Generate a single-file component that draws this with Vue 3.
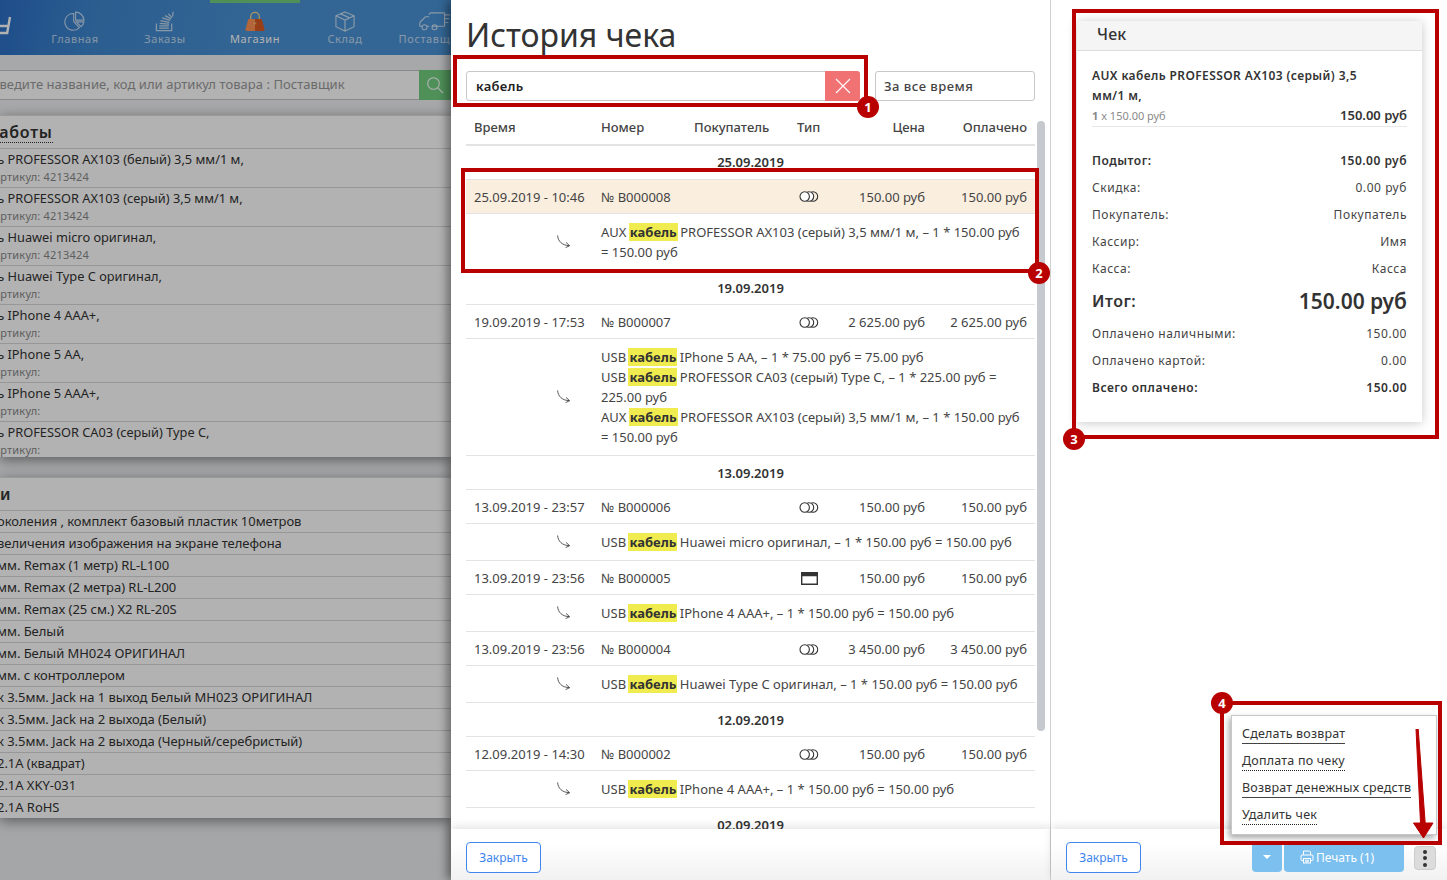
<script setup>
const navItems = [
  { key: 'pie', label: 'Главная' },
  { key: 'stack', label: 'Заказы' },
  { key: 'bag', label: 'Магазин', active: true },
  { key: 'box', label: 'Склад' },
  { key: 'truck', label: 'Поставщики' }
]
const works = [
  'Кабель PROFESSOR AX103 (белый) 3,5 мм/1 м,|Артикул: 4213424',
  'Кабель PROFESSOR AX103 (серый) 3,5 мм/1 м,|Артикул: 4213424',
  'Кабель Huawei micro оригинал,|Артикул: 4213424',
  'Кабель Huawei Type C оригинал,|Артикул:',
  'Кабель IPhone 4 AAA+,|Артикул:',
  'Кабель IPhone 5 AA,|Артикул:',
  'Кабель IPhone 5 AAA+,|Артикул:',
  'Кабель PROFESSOR CA03 (серый) Type C,|Артикул:'
].map((s) => { const [name, sub] = s.split('|'); return { name, sub } })
const simple = [
  'околения , комплект базовый пластик 10метров',
  'величения изображения на экране телефона',
  'мм. Remax (1 метр) RL-L100',
  'мм. Remax (2 метра) RL-L200',
  'мм. Remax (25 см.) X2 RL-20S',
  'мм. Белый',
  'мм. Белый MH024 ОРИГИНАЛ',
  'мм. с контроллером',
  'к 3.5мм. Jack на 1 выход Белый MH023 ОРИГИНАЛ',
  'к 3.5мм. Jack на 2 выхода (Белый)',
  'к 3.5мм. Jack на 2 выхода (Черный/серебристый)',
  '2.1A (квадрат)',
  '2.1A XKY-031',
  '2.1A RoHS'
]
const groups = [
  { date: '25.09.2019', rows: [
    { time: '25.09.2019 - 10:46', no: '№ B000008', type: 'cash', price: '150.00 руб', paid: '150.00 руб', sel: true,
      items: [['AUX', 'PROFESSOR AX103 (серый) 3,5 мм/1 м, – 1 * 150.00 руб = 150.00 руб']] }
  ] },
  { date: '19.09.2019', rows: [
    { time: '19.09.2019 - 17:53', no: '№ B000007', type: 'cash', price: '2 625.00 руб', paid: '2 625.00 руб',
      items: [
        ['USB', 'IPhone 5 AA, – 1 * 75.00 руб = 75.00 руб'],
        ['USB', 'PROFESSOR CA03 (серый) Type C, – 1 * 225.00 руб = 225.00 руб'],
        ['AUX', 'PROFESSOR AX103 (серый) 3,5 мм/1 м, – 1 * 150.00 руб = 150.00 руб']
      ] }
  ] },
  { date: '13.09.2019', rows: [
    { time: '13.09.2019 - 23:57', no: '№ B000006', type: 'cash', price: '150.00 руб', paid: '150.00 руб',
      items: [['USB', 'Huawei micro оригинал, – 1 * 150.00 руб = 150.00 руб']] },
    { time: '13.09.2019 - 23:56', no: '№ B000005', type: 'card', price: '150.00 руб', paid: '150.00 руб',
      items: [['USB', 'IPhone 4 AAA+, – 1 * 150.00 руб = 150.00 руб']] },
    { time: '13.09.2019 - 23:56', no: '№ B000004', type: 'cash', price: '3 450.00 руб', paid: '3 450.00 руб',
      items: [['USB', 'Huawei Type C оригинал, – 1 * 150.00 руб = 150.00 руб']] }
  ] },
  { date: '12.09.2019', rows: [
    { time: '12.09.2019 - 14:30', no: '№ B000002', type: 'cash', price: '150.00 руб', paid: '150.00 руб',
      items: [['USB', 'IPhone 4 AAA+, – 1 * 150.00 руб = 150.00 руб']] }
  ] },
  { date: '02.09.2019', rows: [] }
]
const summary = [
  { l: 'Подытог:', r: '150.00 руб', cls: 'strong' },
  { l: 'Скидка:', r: '0.00 руб' },
  { l: 'Покупатель:', r: 'Покупатель' },
  { l: 'Кассир:', r: 'Имя' },
  { l: 'Касса:', r: 'Касса' },
  { l: 'Итог:', r: '150.00 руб', cls: 'total' },
  { l: 'Оплачено наличными:', r: '150.00' },
  { l: 'Оплачено картой:', r: '0.00' },
  { l: 'Всего оплачено:', r: '150.00', cls: 'strong' }
]
const menu = [
  { t: 'Сделать возврат', s: 'solid' },
  { t: 'Доплата по чеку', s: 'dotted' },
  { t: 'Возврат денежных средств', s: 'solid' },
  { t: 'Удалить чек', s: 'dotted' }
]
const frames = [
  { n: 1, cls: 'f1' }, { n: 2, cls: 'f2' }, { n: 3, cls: 'f3' }, { n: 4, cls: 'f4' }
]
</script>

<template>
  <div class="page">
    <aside class="shop">
      <header class="topbar">
        <div class="logo">
          <svg width="30" height="55" viewBox="0 0 30 55" fill="none" stroke="#fff" stroke-width="2.4">
            <path d="M10 17 L7 34 M-2 33 H7 M-2 26 H8" />
          </svg>
        </div>
        <nav class="nav">
          <a v-for="n in navItems" :key="n.key" class="nav-item" :class="{ active: n.active }">
            <svg v-if="n.key === 'pie'" class="ico" width="22" height="22" viewBox="0 0 22 22" fill="none" stroke="currentColor" stroke-width="1.2">
              <path d="M9.6 2.6 A8.8 8.8 0 1 0 15.6 17.4 L9.6 11 Z" />
              <path d="M11.6 1.2 A8.8 8.8 0 0 1 20.4 9.6 L11.6 9.6 Z" />
              <path d="M12.4 11.4 L20.3 11.4 A8.8 8.8 0 0 1 17.4 16.4 Z" />
            </svg>
            <svg v-else-if="n.key === 'stack'" class="ico" width="22" height="22" viewBox="0 0 22 22" fill="none" stroke="currentColor" stroke-width="1.3">
              <path d="M2 13 V20.5 H18 V13" />
              <path d="M5 18 H15 M5 15.5 H15 M5.4 13 L15.2 13.8 M6.2 10.2 L15.6 11.8 M8 7.2 L16.4 9.8 M11 4.8 L17.4 8.2 M14.4 3 L18.4 6.8 M19.6 1 L19 5.6" />
            </svg>
            <svg v-else-if="n.key === 'bag'" class="ico" width="22" height="22" viewBox="0 0 22 22">
              <path d="M6.5 9 V6 A4.5 4.5 0 0 1 15.5 6 V9" fill="none" stroke="#f5d68c" stroke-width="1.3" />
              <path d="M4 8.5 H11 V21 H2.5 Q1 21 1 19 Z" fill="#ff9253" />
              <path d="M11 8.5 H18 L21 19 Q21 21 19.5 21 H11 Z" fill="#dc5b22" />
              <rect x="9.6" y="12" width="2.8" height="2" fill="#f5d68c" opacity=".6" />
            </svg>
            <svg v-else-if="n.key === 'box'" class="ico" width="22" height="22" viewBox="0 0 22 22" fill="none" stroke="currentColor" stroke-width="1.2">
              <path d="M11 1 L20.5 5 V16.5 L11 21 L1.5 16.5 V5 Z" />
              <path d="M1.5 5 L11 9.5 L20.5 5 M11 9.5 V21 M6.5 3 L15.8 7.2" />
            </svg>
            <svg v-else class="ico" width="34" height="22" viewBox="0 0 34 22" fill="none" stroke="currentColor" stroke-width="1.2">
              <path d="M11 4 Q11 2 13 2 H27 V16 H14" />
              <path d="M11 6 H7 L2 11 Q1 12 1 14 V16 H3.5 M8.5 16 H11" />
              <circle cx="6" cy="17" r="2.6" />
              <circle cx="16.5" cy="17" r="2.6" />
              <path d="M27 4 H33 M27 8 H32 M27 12 H31" />
            </svg>
            <span class="nav-label">{{ n.label }}</span>
          </a>
        </nav>
      </header>

      <div class="shop-search">
        <div class="shop-input"><span>Введите название, код или артикул товара : Поставщик</span></div>
        <button class="shop-go" type="button" aria-label="Поиск">
          <svg width="18" height="18" viewBox="0 0 18 18" fill="none" stroke="#fff" stroke-width="1.1">
            <circle cx="7.5" cy="7.5" r="5.8" />
            <path d="M11.8 11.8 L17 17" />
          </svg>
        </button>
      </div>

      <section class="card-list works">
        <h3 class="list-title"><span class="dotted">Работы</span></h3>
        <div v-for="w in works" :key="w.name" class="work-row">
          <div class="work-name">{{ w.name }}</div>
          <div class="work-sub">{{ w.sub }}</div>
        </div>
      </section>

      <section class="card-list simple">
        <h3 class="list-title short">и</h3>
        <div v-for="s in simple" :key="s" class="simple-row">{{ s }}</div>
      </section>

      <div class="dim"></div>
    </aside>

    <main class="history">
      <h1 class="title">История чека</h1>
      <div class="filters">
        <div class="search">
          <span class="search-val">кабель</span>
          <button class="clear" type="button" aria-label="Очистить">
            <svg width="16" height="16" viewBox="0 0 16 16" fill="none" stroke="#fff" stroke-width="1.1">
              <path d="M1 1 L15 15 M15 1 L1 15" />
            </svg>
          </button>
        </div>
        <div class="period">За все время</div>
      </div>

      <div class="table">
        <div class="grid thead">
          <span>Время</span><span>Номер</span><span>Покупатель</span><span>Тип</span>
          <span class="num">Цена</span><span class="num">Оплачено</span>
        </div>
        <template v-for="g in groups" :key="g.date">
          <div class="date-row">{{ g.date }}</div>
          <template v-for="r in g.rows" :key="r.no">
            <div class="grid row" :class="{ selected: r.sel }">
              <span>{{ r.time }}</span>
              <span>{{ r.no }}</span>
              <span></span>
              <span class="type">
                <svg v-if="r.type === 'cash'" width="20" height="11" viewBox="0 0 20 11" fill="none" stroke="#333" stroke-width="1.1">
                  <circle cx="14" cy="5.5" r="4.7" />
                  <circle cx="10" cy="5.5" r="4.7" fill="#fff" />
                  <circle cx="5.7" cy="5.5" r="4.7" fill="#fff" />
                </svg>
                <svg v-else width="17" height="13" viewBox="0 0 17 13">
                  <path d="M0 0 H17 V13 H0 Z M1.4 4.2 V11.6 H15.6 V4.2 Z" fill="#333" fill-rule="evenodd" />
                </svg>
              </span>
              <span class="num">{{ r.price }}</span>
              <span class="num">{{ r.paid }}</span>
            </div>
            <div class="detail">
              <span class="turn">
                <svg width="14" height="14" viewBox="0 0 14 14" fill="none" stroke="#444" stroke-width=".9">
                  <path d="M.6 .5 C1 6 5 10.6 12.4 10.6" />
                  <path d="M9 7.4 L12.6 10.7 L8.6 12.6" />
                </svg>
              </span>
              <div class="lines">
                <div v-for="(it, i) in r.items" :key="i">{{ it[0] }} <mark class="hit">кабель</mark> {{ it[1] }}</div>
              </div>
            </div>
          </template>
        </template>
      </div>
      <div class="scroll-thumb"></div>

      <footer class="foot">
        <button class="btn-close" type="button">Закрыть</button>
      </footer>
    </main>

    <section class="receipt">
      <div class="receipt-scroll">
        <article class="card">
          <h2 class="card-head">Чек</h2>
          <div class="card-body">
            <div class="item-name">AUX кабель PROFESSOR AX103 (серый) 3,5 мм/1 м,</div>
            <div class="item-meta">
              <span class="qty"><b>1</b> x 150.00 руб</span>
              <b class="item-sum">150.00 руб</b>
            </div>
            <div class="sums">
              <div v-for="s in summary" :key="s.l" class="sum" :class="s.cls">
                <span>{{ s.l }}</span><span>{{ s.r }}</span>
              </div>
            </div>
          </div>
        </article>
      </div>
      <footer class="foot">
        <button class="btn-close" type="button">Закрыть</button>
        <div class="actions">
          <button class="caret" type="button" aria-label="Ещё"><i></i></button>
          <button class="print" type="button">
            <svg width="14" height="14" viewBox="0 0 14 14" fill="none" stroke="#fff" stroke-width="1">
              <path d="M3.5 5 V1 H9.5 L10.5 2 V5" />
              <rect x="1" y="5" width="12" height="5.5" rx="1" />
              <rect x="3.5" y="8.5" width="7" height="4.5" fill="#7cc0ef" />
              <path d="M5 10.2 H9 M5 11.8 H9" />
            </svg>
            <span>Печать (1)</span>
          </button>
          <button class="kebab" type="button" aria-label="Меню"><i></i><i></i><i></i></button>
        </div>
      </footer>
      <div class="popup">
        <div v-for="m in menu" :key="m.t" class="popup-item">
          <a :class="m.s">{{ m.t }}</a>
        </div>
      </div>
    </section>

    <div v-for="f in frames" :key="f.n" class="frame" :class="f.cls">
      <span class="badge">{{ f.n }}</span>
    </div>
    <svg class="pointer" width="30" height="112" viewBox="0 0 30 112">
      <path d="M5 0 L7.2 0 L14.2 94 L22 94 L12.5 109 L2.5 94 L9.5 94 Z" fill="#b80000" stroke="#b80000" stroke-linejoin="round" />
    </svg>
  </div>
</template>

<style scoped>
.page {
  position: relative;
  display: flex;
  width: 1447px;
  height: 880px;
  overflow: hidden;
  font-family: "Noto Sans", "Open Sans", sans-serif;
  font-size: 13px;
  color: #333;
  background: #fff;
}
button { font-family: inherit; border: 0; padding: 0; }

/* left dimmed shop */
.shop {
  position: relative;
  flex: 0 0 451px;
  height: 880px;
  overflow: hidden;
  background: linear-gradient(180deg, #f0f1f3 0, #eceef0 100%);
}
.dim {
  position: absolute;
  inset: 0;
  background: rgba(0, 0, 0, 0.3);
}
.topbar {
  display: flex;
  height: 55px;
  background: linear-gradient(100deg, #2c6fc6 0, #3f88cf 22%, #4a93d5 60%, #4a93d6 100%);
}
.logo { flex: 0 0 30px; height: 55px; overflow: hidden; }
.nav { display: flex; }
.nav-item {
  position: relative;
  flex: 0 0 90px;
  height: 55px;
  display: flex;
  flex-direction: column;
  align-items: center;
  padding-top: 11px;
  box-sizing: border-box;
  color: rgba(255, 255, 255, 0.68);
}
.nav-item.active { color: #fff; }
.nav-item.active::before {
  content: "";
  position: absolute;
  top: 0;
  left: 0;
  right: 0;
  height: 3px;
  background: #72cf80;
}
.ico { display: block; height: 21px; flex: none; }
.nav-label {
  font-size: 11px;
  line-height: 14px;
  letter-spacing: 0.6px;
  white-space: nowrap;
}
.shop-search {
  display: flex;
  height: 30px;
  margin-top: 15px;
}
.shop-input {
  flex: 1;
  background: #fff;
  border-top: 1px solid #c4c4c4;
  border-bottom: 1px solid #c4c4c4;
  line-height: 27px;
  overflow: hidden;
  white-space: nowrap;
  color: #999;
  letter-spacing: 0.04px;
}
.shop-input span { display: block; margin-left: -9px; }
.shop-go {
  flex: 0 0 32px;
  background: #72cf80;
  display: flex;
  align-items: center;
  justify-content: center;
}
.card-list {
  background: #fff;
  box-shadow: 0 3px 12px rgba(0, 0, 0, 0.45);
  border-top: 1px solid #ddd;
  overflow: hidden;
  box-sizing: border-box;
}
.works { margin-top: 15px; height: 342px; }
.simple { margin-top: 20px; height: 341px; }
.list-title {
  margin: 0;
  height: 32px;
  line-height: 32px;
  font-size: 16px;
  font-weight: 600;
  margin-left: -11px;
  white-space: nowrap;
}
.list-title.short { margin-left: 0; }
.dotted { display: inline-block; line-height: 20px; letter-spacing: 0.75px; border-bottom: 1px dotted #333; }
.work-row {
  height: 39px;
  box-sizing: border-box;
  border-top: 1px solid #d8d8d8;
  white-space: nowrap;
  overflow: hidden;
}
.work-name { line-height: 20px; margin-left: -40px; font-size: 12.8px; }
.work-sub { line-height: 16px; font-size: 11px; color: #888; margin-left: -7px; letter-spacing: 0.2px; }
.simple-row {
  height: 22px;
  box-sizing: border-box;
  border-top: 1px solid #d8d8d8;
  line-height: 21px;
  text-indent: -3px;
  white-space: nowrap;
  letter-spacing: -0.04px;
}

/* middle */
.history {
  position: relative;
  z-index: 2;
  flex: 0 0 600px;
  box-sizing: border-box;
  height: 880px;
  border-right: 1px solid #cfcfcf;
  background: #fff;
  box-shadow: -4px 0 9px rgba(0, 0, 0, 0.4);
  display: flex;
  flex-direction: column;
}
.title {
  margin: 0;
  height: 71px;
  padding: 12px 0 0 15px;
  box-sizing: border-box;
  font-size: 32px;
  font-weight: 400;
  line-height: 46px;
  color: #333;
}
.filters {
  display: flex;
  height: 30px;
  padding-left: 15px;
  flex: none;
}
.search {
  width: 394px;
  box-sizing: border-box;
  border: 1px solid #c8c8c8;
  border-radius: 3px;
  display: flex;
  align-items: center;
}
.search-val {
  flex: 1;
  padding-left: 9px;
  font-weight: 600;
  color: #222;
  letter-spacing: 0.3px;
}
.clear {
  flex: 0 0 35px;
  height: 30px;
  margin-right: -1px;
  border-radius: 0 3px 3px 0;
  background: #f17272;
  display: flex;
  align-items: center;
  justify-content: center;
}
.period {
  margin-left: 15px;
  width: 160px;
  box-sizing: border-box;
  border: 1px solid #c8c8c8;
  border-radius: 3px;
  padding-left: 8px;
  line-height: 28px;
  font-weight: 500;
  letter-spacing: 0.5px;
  color: #444;
}
.table {
  flex: 1;
  min-height: 0;
  overflow: hidden;
  margin-left: 15px;
  width: 569px;
}
.grid {
  display: grid;
  grid-template-columns: 127px 93px 103px 40px 88px 102px;
  padding: 0 8px;
  align-items: center;
}
.num { text-align: right; white-space: nowrap; }
.thead {
  height: 45px;
  box-sizing: border-box;
  padding-top: 17px;
  padding-bottom: 8px;
  border-bottom: 2px solid #e3e3e3;
  font-weight: 500;
  line-height: 18px;
  color: #444;
}
.date-row {
  height: 34px;
  box-sizing: border-box;
  border-bottom: 1px solid #e3e3e3;
  text-align: center;
  line-height: 33px;
  font-weight: 600;
  color: #333;
}
.date-row ~ .date-row { line-height: 34px; }
.row {
  height: 34px;
  box-sizing: border-box;
  border-bottom: 1px solid #e3e3e3;
  color: #444;
  white-space: nowrap;
}
.row.selected { background: #faeedf; }
.row:not(.selected) { padding-top: 1px; }
.type { display: flex; justify-content: center; padding-right: 16px; align-items: center; }
.detail {
  display: grid;
  grid-template-columns: 127px 1fr;
  padding: 8px;
  border-bottom: 1px solid #e3e3e3;
  align-items: center;
  color: #444;
  line-height: 20px;
}
.turn { display: block; padding-left: 83px; height: 14px; }
.turn svg { display: block; }
.hit {
  background: #f0ec4f;
  color: #333;
  font-weight: 700;
  padding: 0 1px;
  margin: 0 -1px;
}
.scroll-thumb {
  position: absolute;
  left: 586px;
  top: 121px;
  width: 8px;
  height: 610px;
  border-radius: 4px;
  background: #c6c9cd;
}
.foot {
  flex: none;
  position: relative;
  z-index: 1;
  height: 51px;
  box-sizing: border-box;
  padding: 13px 0 0 15px;
  display: flex;
  background: linear-gradient(180deg, #fff 0, #fff 30%, #f1f1f1 100%);
  box-shadow: 0 -3px 8px rgba(0, 0, 0, 0.1);
}
.btn-close {
  width: 75px;
  height: 31px;
  box-sizing: border-box;
  background: #fff;
  border: 1px solid #3f86ee;
  border-radius: 4px;
  color: #3f86ee;
  font-size: 12px;
}

/* right */
.receipt {
  position: relative;
  flex: 1;
  height: 880px;
  display: flex;
  flex-direction: column;
  z-index: 2;
  background: #fff;
}
.receipt-scroll {
  flex: 1;
  min-height: 0;
  padding: 21px 0 0 26px;
  box-sizing: border-box;
}
.card {
  width: 345px;
  background: #fff;
  box-shadow: 0 1px 10px rgba(0, 0, 0, 0.22);
}
.card-head {
  margin: 0;
  height: 30px;
  box-sizing: border-box;
  padding-left: 20px;
  background: #f5f5f5;
  border-bottom: 1px solid #dcdcdc;
  font-size: 16px;
  font-weight: 500;
  line-height: 27px;
  color: #333;
  letter-spacing: 0.2px;
}
.card-body { padding: 15px 15px 21px; }
.item-name {
  max-width: 290px;
  font-size: 12px;
  font-weight: 600;
  line-height: 20px;
  color: #333;
  letter-spacing: 0.4px;
}
.item-meta {
  display: flex;
  justify-content: space-between;
  align-items: flex-start;
  height: 21px;
  box-sizing: border-box;
  border-bottom: 1px solid #e8e8e8;
  line-height: 19px;
}
.qty { font-size: 11px; color: #8a8a8a; }
.item-sum { font-size: 13px; font-weight: 600; color: #333; }
.sums { margin-top: 20px; }
.sum {
  display: flex;
  justify-content: space-between;
  align-items: center;
  height: 27px;
  font-size: 12px;
  color: #444;
  letter-spacing: 0.55px;
}
.sum.strong { font-weight: 600; color: #333; letter-spacing: 0.5px; }
.sum.total {
  height: 38px;
  font-size: 16px;
  font-weight: 600;
  color: #333;
  letter-spacing: 0.5px;
}
.sum.total span:last-child { font-size: 21px; letter-spacing: 0; }
.actions {
  margin-left: auto;
  margin-top: 0;
  margin-right: 11px;
  display: flex;
  align-items: flex-start;
}
.caret {
  width: 30px;
  height: 30px;
  background: #7cc0ef;
  border-radius: 4px;
  display: flex;
  align-items: center;
  justify-content: center;
}
.caret i {
  width: 0;
  height: 0;
  border-left: 4px solid transparent;
  border-right: 4px solid transparent;
  border-top: 4px solid #fff;
}
.print {
  margin-left: 2px;
  width: 120px;
  height: 30px;
  padding-right: 14px;
  box-sizing: border-box;
  background: #7cc0ef;
  border-radius: 4px;
  color: #fff;
  font-size: 12px;
  display: flex;
  align-items: center;
  justify-content: center;
  gap: 2px;
}
.kebab {
  margin-left: 10px;
  margin-top: 4px;
  width: 22px;
  height: 24px;
  background: #dcdcdc;
  border: 1px solid #ccc;
  box-sizing: border-box;
  border-radius: 4px;
  display: flex;
  flex-direction: column;
  align-items: center;
  justify-content: center;
  gap: 2.5px;
}
.kebab i { width: 4px; height: 4px; border-radius: 50%; background: #333; }
.popup {
  position: absolute;
  left: 180px;
  top: 715px;
  width: 206px;
  height: 120px;
  box-sizing: border-box;
  z-index: 3;
  padding: 5px 0 0 10px;
  background: #fff;
  border: 1px solid #c8c8c8;
  box-shadow: -2px 3px 6px rgba(0, 0, 0, 0.35);
}
.popup-item { height: 27px; display: flex; align-items: flex-start; padding-top: 4px; box-sizing: border-box; }
.popup-item a {
  line-height: 18px;
  font-size: 12.5px;
  color: #333;
  letter-spacing: 0.2px;
  white-space: nowrap;
}
.popup-item a.solid { border-bottom: 1px solid #444; }
.popup-item a.dotted { border-bottom: 1px dotted #222; }

/* annotations */
.frame {
  position: absolute;
  box-sizing: border-box;
  border: 4px solid #b80000;
  z-index: 5;
  pointer-events: none;
}
.f1 { left: 453px; top: 55px; width: 415px; height: 52px; }
.f2 { left: 461px; top: 168px; width: 578px; height: 105px; }
.f3 { left: 1072px; top: 9px; width: 367px; height: 430px; }
.f4 { left: 1220px; top: 701px; width: 222px; height: 144px; }
.badge {
  position: absolute;
  width: 22px;
  height: 22px;
  border-radius: 50%;
  background: #b80000;
  color: #fff;
  font-size: 13px;
  font-weight: 700;
  line-height: 22px;
  text-align: center;
}
.f1 .badge { right: -15px; bottom: -15px; }
.f2 .badge { right: -15px; bottom: -15px; }
.f3 .badge { left: -13px; bottom: -15px; }
.f4 .badge { left: -13px; top: -13px; }
.pointer {
  position: absolute;
  left: 1411px;
  top: 729px;
  z-index: 6;
}
</style>

<style>
html, body { margin: 0; overflow: hidden; }
</style>
